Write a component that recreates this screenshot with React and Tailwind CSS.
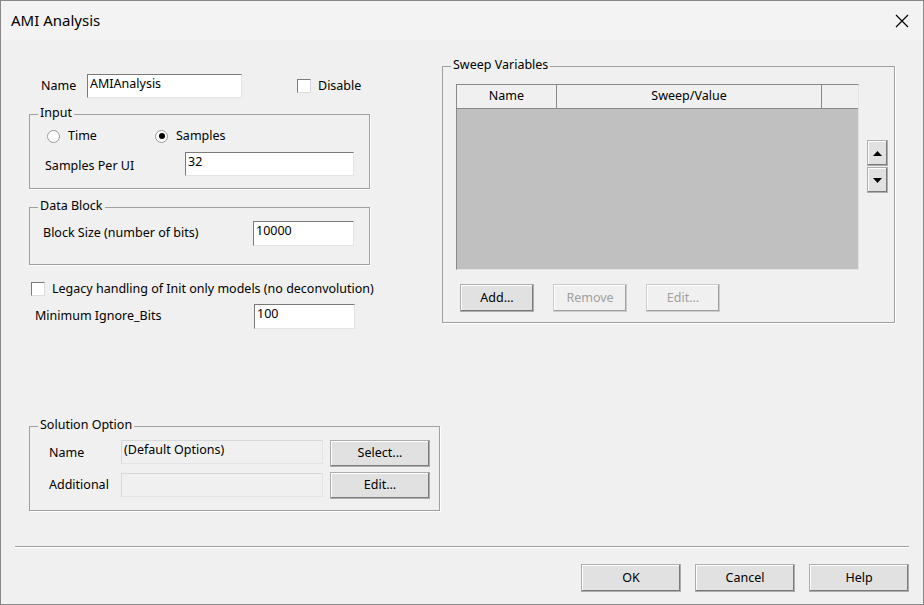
import React from "react";

const F = { fontFamily: '"Noto Sans", "Open Sans", sans-serif' };

function Btn({ children, disabled, className = "" }) {
  return (
    <div className={`flex items-center justify-center bg-[#e1e1e1] border border-[#adadad] shadow-[inset_-1px_-1px_0_#7a7a7a,inset_1px_1px_0_#fff] text-[12.5px] ${disabled ? "text-[#a0a0a0] bg-[#f0f0f0] border-[#cccccc] shadow-[inset_-1px_-1px_0_#a0a0a0,inset_1px_1px_0_#fff]" : "text-black"} ${className}`}>
      {children}
    </div>
  );
}

function Input({ value, className = "", grey }) {
  return (
    <div className={`border border-[#7a7a7a] border-r-[#e3e3e3] border-b-[#e3e3e3] ${grey ? "bg-[#f0f0f0] border-[#d8d8d8]" : "bg-white"} text-[12.5px] leading-[18px] px-[2px] ${className}`}>
      {value}
    </div>
  );
}

function Group({ label, className = "", children }) {
  return (
    <div className={`relative border border-[#a0a0a0] shadow-[1px_1px_0_#fff] ${className}`}>
      <span className="absolute -top-[10px] left-[8px] bg-[#f0f0f0] px-[2px] text-[12.5px] leading-[16px]">{label}</span>
      {children}
    </div>
  );
}

function Check() {
  return <div className="w-[14px] h-[14px] bg-white border border-[#7a7a7a] border-r-[#dcdcdc] border-b-[#dcdcdc]" />;
}

function Radio({ on }) {
  return (
    <div className="w-[13px] h-[13px] rounded-full bg-white border border-[#9a9a9a] flex items-center justify-center">
      {on && <div className="w-[6px] h-[6px] rounded-full bg-black" />}
    </div>
  );
}

export default function App() {
  return (
    <div style={F} className="w-[924px] h-[605px] bg-[#f0f0f0] text-black text-[12.5px] flex flex-col overflow-hidden border border-[#888]">
      <div className="h-[39px] bg-[#f3f3f3] flex items-center justify-between pl-[10px] pr-[14px] shrink-0">
        <span className="text-[15px]">AMI Analysis</span>
        <svg width="14" height="14" viewBox="0 0 14 14"><path d="M1 1L13 13M13 1L1 13" stroke="#000" strokeWidth="1.2" /></svg>
      </div>
      <div className="flex">
        <div className="w-[411px] ml-[28px] flex flex-col">
          <div className="mt-[34px] h-[24px] flex items-center">
            <span className="ml-[12px] w-[46px]">Name</span>
            <Input value="AMIAnalysis" className="w-[155px] h-[24px]" />
            <div className="ml-[55px] flex items-center gap-[7px]"><Check /><span>Disable</span></div>
          </div>
          <Group label="Input" className="mt-[16px] w-[341px] h-[75px]">
            <div className="flex items-center mt-[13px] ml-[17px] h-[16px]">
              <Radio /><span className="ml-[8px] w-[87px]">Time</span>
              <Radio on /><span className="ml-[8px]">Samples</span>
            </div>
            <div className="flex items-center mt-[8px] h-[24px]">
              <span className="ml-[15px] w-[140px] mt-[4px]">Samples Per UI</span>
              <Input value="32" className="w-[169px] h-[24px]" />
            </div>
          </Group>
          <Group label="Data Block" className="mt-[18px] w-[341px] h-[58px]">
            <div className="flex items-center mt-[13px] h-[25px]">
              <span className="ml-[13px] w-[210px]">Block Size (number of bits)</span>
              <Input value="10000" className="w-[101px] h-[25px]" />
            </div>
          </Group>
          <div className="mt-[16px] flex items-center ml-[2px] h-[16px]">
            <Check /><span className="ml-[7px]">Legacy handling of Init only models (no deconvolution)</span>
          </div>
          <div className="mt-[7px] flex items-center h-[25px]">
            <span className="ml-[6px] w-[219px]">Minimum Ignore_Bits</span>
            <Input value="100" className="w-[101px] h-[25px]" />
          </div>
          <Group label="Solution Option" className="mt-[97px] w-[411px] h-[85px]">
            <div className="flex items-center mt-[13px] h-[26px]">
              <span className="ml-[19px] w-[72px]">Name</span>
              <Input grey value="(Default Options)" className="w-[202px] h-[24px] -mt-[2px]" />
              <Btn className="ml-[7px] w-[100px] h-[27px]">Select...</Btn>
            </div>
            <div className="flex items-center mt-[6px] h-[26px]">
              <span className="ml-[19px] w-[72px]">Additional</span>
              <Input grey value="" className="w-[202px] h-[24px]" />
              <Btn className="ml-[7px] w-[100px] h-[27px]">Edit...</Btn>
            </div>
          </Group>
        </div>
        <Group label="Sweep Variables" className="ml-[2px] mt-[26px] w-[453px] h-[257px]">
          <div className="flex">
            <div className="ml-[13px] mt-[17px] w-[403px] h-[186px] border border-[#8a8a8a] border-r-[#e3e3e3] border-b-[#e3e3e3] bg-[#c0c0c0] flex flex-col">
              <div className="h-[24px] flex bg-[#f0f0f0] border-b border-[#8a8a8a]">
                <div className="w-[100px] flex items-center justify-center border-r border-[#8a8a8a]">Name</div>
                <div className="w-[265px] flex items-center justify-center border-r border-[#8a8a8a]">Sweep/Value</div>
                <div className="flex-1" />
              </div>
            </div>
            <div className="ml-[8px] mt-[73px] flex flex-col gap-[1px]">
              <Btn className="w-[21px] h-[26px]"><svg width="9" height="5" viewBox="0 0 9 5"><path d="M4.5 0L9 5H0Z" fill="#000" /></svg></Btn>
              <Btn className="w-[21px] h-[26px]"><svg width="9" height="5" viewBox="0 0 9 5"><path d="M0 0H9L4.5 5Z" fill="#000" /></svg></Btn>
            </div>
          </div>
          <div className="flex mt-[14px] ml-[17px] gap-[19px]">
            <Btn className="w-[74px] h-[28px]">Add...</Btn>
            <Btn disabled className="w-[74px] h-[28px]">Remove</Btn>
            <Btn disabled className="w-[74px] h-[28px]">Edit...</Btn>
          </div>
        </Group>
      </div>
      <div className="mt-[35px] mx-[14px] h-[2px] border-t border-[#a0a0a0] border-b border-b-white" />
      <div className="mt-[16px] flex justify-end gap-[14px] pr-[14px]">
        <Btn className="w-[100px] h-[28px] border-[#555]">OK</Btn>
        <Btn className="w-[100px] h-[28px]">Cancel</Btn>
        <Btn className="w-[100px] h-[28px]">Help</Btn>
      </div>
    </div>
  );
}
